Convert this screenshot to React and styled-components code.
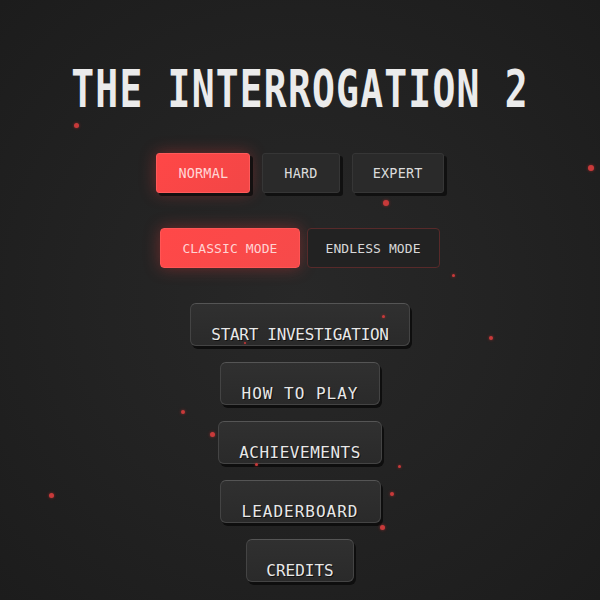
import styled, { createGlobalStyle } from 'styled-components'

const GlobalStyle = createGlobalStyle`
  html, body {
    margin: 0;
    padding: 0;
    background: #1e1e1e;
  }
  #root {
    width: 600px;
    height: 600px;
    overflow: hidden;
  }
`

const Screen = styled.div`
  position: relative;
  width: 600px;
  height: 600px;
  overflow: hidden;
  background: radial-gradient(ellipse at 50% 50%, #282828 0%, #232323 45%, #1c1c1c 100%);
  display: flex;
  flex-direction: column;
  align-items: center;
  font-family: "DejaVu Sans Mono", "Liberation Mono", monospace;
`

const Title = styled.h1`
  margin: 69px 0 0;
  height: 40px;
  line-height: 40px;
  font-size: 38px;
  font-weight: bold;
  letter-spacing: 1.2px;
  color: #ebebeb;
  white-space: nowrap;
  transform: scaleY(1.37);
`

const Row = styled.div`
  display: flex;
  gap: ${p => p.$gap}px;
  margin-top: ${p => p.$top}px;
`

const ChoiceButton = styled.button`
  height: 40px;
  padding: 0 ${p => p.$pad || 21}px;
  font-family: inherit;
  font-size: 13.5px;
  letter-spacing: 0.2px;
  border-radius: 3px;
  cursor: pointer;
  color: ${p => (p.$active ? '#ffd6d6' : '#dcdcdc')};
  background: ${p => (p.$active ? 'linear-gradient(135deg, #ff4747 0%, #f24646 100%)' : '#2a2a2a')};
  border: 1px solid ${p => (p.$active ? '#ff5a5a' : '#363636')};
  box-shadow: ${p =>
    p.$active
      ? '3px 3px 0 #141010, 0 0 16px rgba(255, 60, 60, 0.35)'
      : '3px 3px 0 #101010'};
`

const ModeButton = styled.button`
  height: 40px;
  padding: 0 ${p => p.$pad || 22}px;
  font-family: inherit;
  font-size: 13px;
  letter-spacing: 0.1px;
  border-radius: 4px;
  cursor: pointer;
  color: ${p => (p.$active ? '#ffd3d3' : '#d8d8d8')};
  background: ${p => (p.$active ? 'linear-gradient(135deg, #ff4848 0%, #f64a4a 100%)' : '#222222')};
  border: 1px solid ${p => (p.$active ? '#ff5555' : '#582a2a')};
  box-shadow: ${p => (p.$active ? '0 0 16px rgba(255, 60, 60, 0.35)' : 'none')};
`

const Menu = styled.div`
  display: flex;
  flex-direction: column;
  align-items: center;
  gap: 16px;
  margin-top: 35px;
`

const MenuButton = styled.button`
  width: ${p => p.$w}px;
  height: 43px;
  box-sizing: border-box;
  padding: 22px 0 2px;
  line-height: 18px;
  font-family: inherit;
  font-size: 16px;
  letter-spacing: ${p => p.$ls || 0}px;
  white-space: nowrap;
  color: #e8e8e8;
  text-shadow: 1px 1px 0 #111;
  background: linear-gradient(180deg, #303030 0%, #2a2a2a 100%);
  border: 1px solid #444;
  border-top-color: #555;
  border-radius: 6px;
  box-shadow: 2px 3px 0 #0e0e0e;
  cursor: pointer;
`

const Spark = styled.span`
  position: absolute;
  border-radius: 50%;
  background: #c83a3a;
  box-shadow: 0 0 3px rgba(220, 50, 50, 0.6);
  pointer-events: none;
`

const sparks = [
  [76, 125, 5],
  [386, 203, 6],
  [591, 168, 6],
  [453, 275, 3],
  [383, 316, 3],
  [491, 338, 4],
  [245, 343, 2],
  [183, 412, 4],
  [212, 434, 5],
  [256, 464, 3],
  [399, 466, 3],
  [51, 495, 5],
  [392, 494, 4],
  [382, 527, 5],
]

const menu = [
  ['START INVESTIGATION', 220, -0.3],
  ['HOW TO PLAY', 160, 1],
  ['ACHIEVEMENTS', 164, 0.5],
  ['LEADERBOARD', 161, 1],
  ['CREDITS', 108, 0],
]

export default function App() {
  return (
    <>
      <GlobalStyle />
      <Screen>
        {sparks.map(([x, y, s], i) => (
          <Spark key={i} style={{ left: x - s / 2, top: y - s / 2, width: s, height: s }} />
        ))}
        <Title>THE INTERROGATION 2</Title>
        <Row $gap={12} $top={44}>
          <ChoiceButton $active $pad={21}>NORMAL</ChoiceButton>
          <ChoiceButton $pad={21}>HARD</ChoiceButton>
          <ChoiceButton $pad={20}>EXPERT</ChoiceButton>
        </Row>
        <Row $gap={7} $top={35}>
          <ModeButton $active $pad={21}>CLASSIC MODE</ModeButton>
          <ModeButton $pad={18}>ENDLESS MODE</ModeButton>
        </Row>
        <Menu>
          {menu.map(([label, w, ls]) => (
            <MenuButton key={label} $w={w} $ls={ls}>{label}</MenuButton>
          ))}
        </Menu>
      </Screen>
    </>
  )
}
